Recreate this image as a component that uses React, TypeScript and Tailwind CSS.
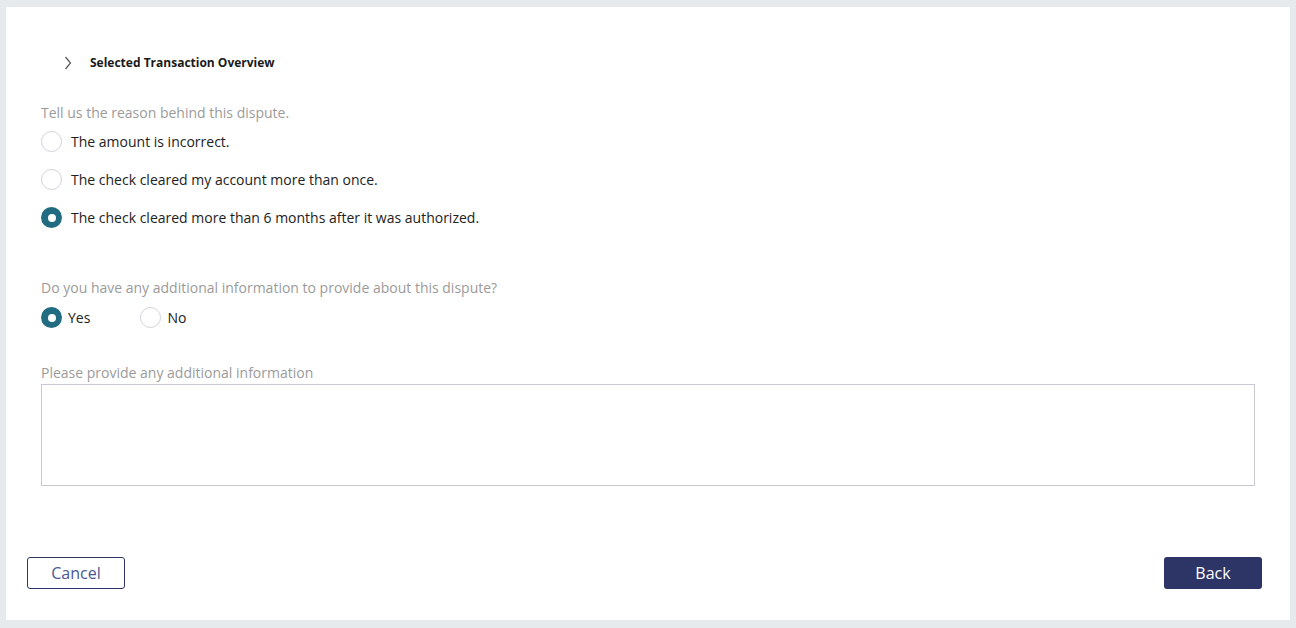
import { useState } from "react";

function Radio({ checked, label, gap = "gap-[9px]" }: { checked: boolean; label: string; gap?: string }) {
  return (
    <label className={`flex items-center ${gap} cursor-pointer`}>
      {checked ? (
        <span className="w-[21px] h-[21px] rounded-full bg-[#216c80] flex items-center justify-center shrink-0">
          <span className="w-[8px] h-[8px] rounded-full bg-white" />
        </span>
      ) : (
        <span className="w-[21px] h-[21px] rounded-full border border-[#cfd3da] bg-white shrink-0" />
      )}
      <span className="text-[14px] text-[#222]">{label}</span>
    </label>
  );
}

export default function App() {
  const [reason] = useState(2);
  const reasons = [
    "The amount is incorrect.",
    "The check cleared my account more than once.",
    "The check cleared more than 6 months after it was authorized.",
  ];

  return (
    <div className="w-[1296px] h-[628px] bg-[#e6eaed] pt-[7px] pl-[6px] pr-[6px] pb-[8px] font-['Open_Sans',sans-serif]">
      <div className="w-full h-full bg-white flex flex-col">
        <div className="flex items-center h-[20px] mt-[46px] pl-[58px]">
          <svg width="8" height="14" viewBox="0 0 8 14" className="text-[#555]">
            <path d="M1.5 1 L6.5 7 L1.5 13" fill="none" stroke="currentColor" strokeWidth="1.2" />
          </svg>
          <span className="ml-[18px] text-[12px] font-bold text-[#1a1a1a]">Selected Transaction Overview</span>
        </div>

        <div className="pl-[35px] pr-[35px]">
          <div className="mt-[30px] text-[14px] text-[#9b9b9b] leading-[20px]">Tell us the reason behind this dispute.</div>
          <div className="mt-[8px] flex flex-col gap-[17px]">
            {reasons.map((r, i) => (
              <Radio key={i} checked={i === reason} label={r} />
            ))}
          </div>

          <div className="mt-[50px] text-[14px] text-[#9b9b9b] leading-[20px]">Do you have any additional information to provide about this dispute?</div>
          <div className="mt-[9px] flex items-center gap-[50px]">
            <Radio checked label="Yes" gap="gap-[6px]" />
            <Radio checked={false} label="No" gap="gap-[6px]" />
          </div>

          <div className="mt-[35px] text-[14px] text-[#9b9b9b] leading-[20px]">Please provide any additional information</div>
          <textarea className="mt-[1px] block w-[1214px] h-[102px] border border-[#c8cbd6] resize-none outline-none" />
        </div>

        <div className="mt-auto mb-[31px] pl-[21px] pr-[28px] flex justify-between">
          <button className="w-[98px] h-[32px] rounded-[3px] border border-[#2d3566] text-[#4a5694] text-[16px]">Cancel</button>
          <button className="w-[98px] h-[32px] rounded-[3px] bg-[#2d3566] text-white text-[16px]">Back</button>
        </div>
      </div>
    </div>
  );
}
